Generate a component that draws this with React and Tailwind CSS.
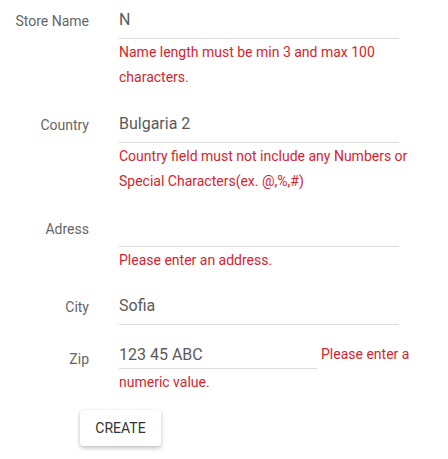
import React from 'react';

const font = { fontFamily: 'Roboto, "Liberation Sans", sans-serif' };

const Field = ({ label, value, error, className = '', labelPad = 'pt-[11px]' }) => (
  <div className={`flex items-start ${className}`}>
    <label className={`w-[89px] shrink-0 text-right text-[14px] leading-5 text-[#666] ${labelPad}`}>
      {label}
    </label>
    <div className="ml-[30px] w-[310px]">
      <div className="w-[280px] border-b border-[#ddd] pt-2 pb-[6px] text-[16px] leading-6 text-[#5a5a5a] min-h-[39px]">
        {value}
      </div>
      {error && <p className="pt-px text-[14px] leading-[25px] text-[#d0262f]">{error}</p>}
    </div>
  </div>
);

export default function App() {
  return (
    <div className="w-[448px] h-[459px] bg-white overflow-hidden" style={font}>
      <form onSubmit={(e) => e.preventDefault()}>
        <Field
          label="Store Name"
          value="N"
          error="Name length must be min 3 and max 100 characters."
          className="mb-[14px]"
        />
        <Field
          label="Country"
          value="Bulgaria 2"
          error="Country field must not include any Numbers or Special Characters(ex. @,%,#)"
          className="mb-[14px]"
        />
        <Field
          label="Adress"
          value=""
          error="Please enter an address."
          className="mb-[13px]"
        />
        <Field label="City" value="Sofia" className="mb-[17px]" />

        {/* zip: error flows inline after the input */}
        <div className="flex items-start">
          <label className="w-[89px] shrink-0 pt-[7px] text-right text-[14px] leading-5 text-[#666]">Zip</label>
          <div className="ml-[30px] w-[310px] text-[14px] leading-[25px] text-[#d0262f]">
            <span className="mr-[4px] mb-[1px] inline-block w-[198px] align-top border-b border-[#ddd] pt-[2px] pb-[2px] text-[16px] leading-[22px] text-[#5a5a5a]">
              123 45 ABC
            </span>
            Please enter a numeric value.
          </div>
        </div>

        <button
          type="submit"
          className="ml-[80px] mt-[15px] h-9 w-[81px] rounded-[3px] bg-white text-[14px] font-normal uppercase text-[#333] shadow-[0_2px_4px_rgba(0,0,0,0.25),0_0_1px_rgba(0,0,0,0.15)]"
        >
          Create
        </button>
      </form>
    </div>
  );
}
